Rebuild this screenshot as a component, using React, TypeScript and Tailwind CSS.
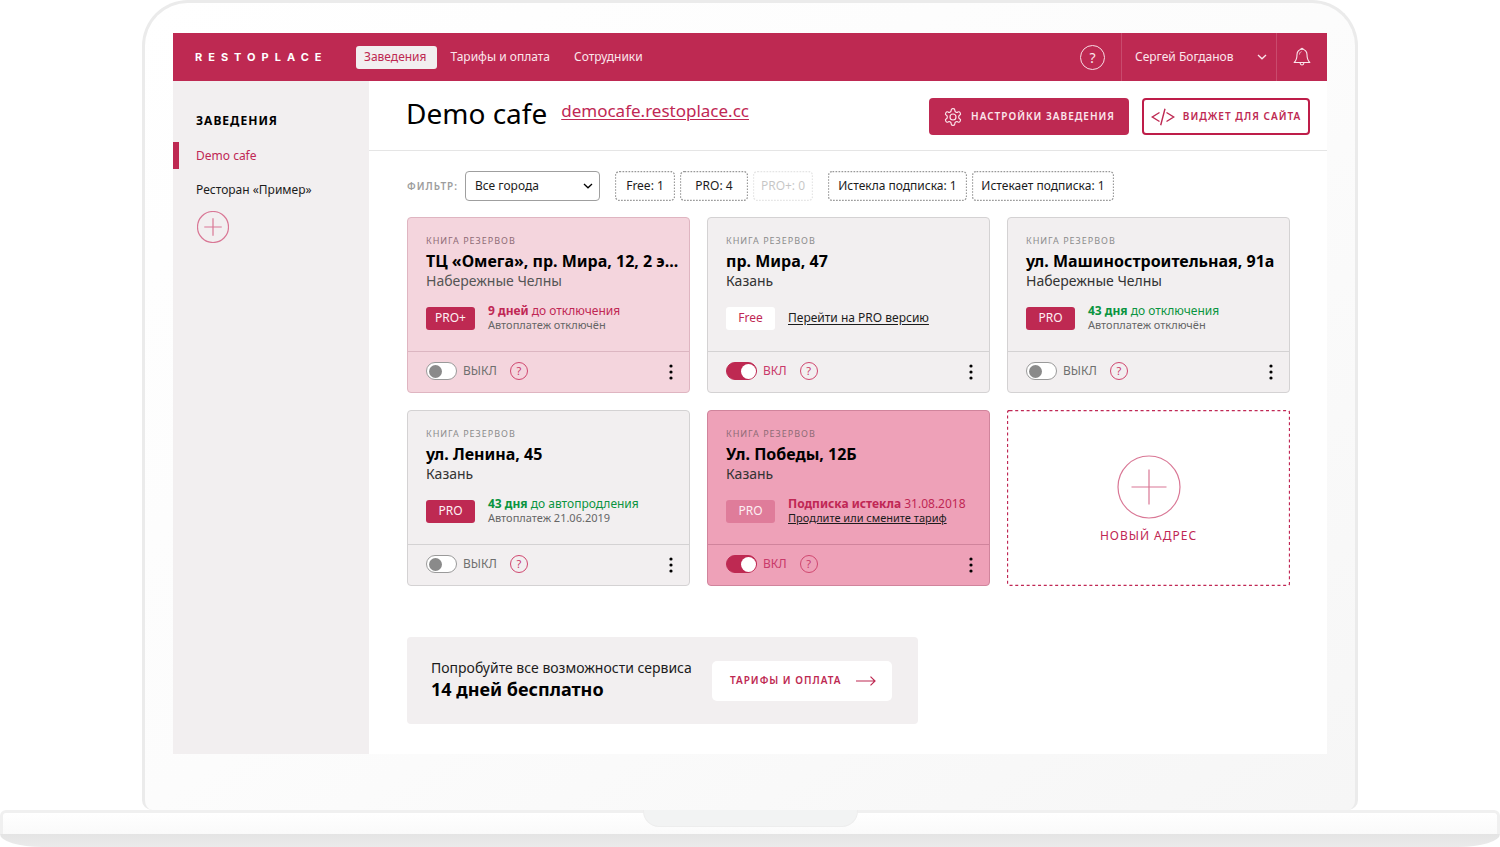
import { clsx } from "clsx";

type Plan = "PRO+" | "PRO" | "Free";

type Venue = {
  id: string;
  title: string;
  city: string;
  plan: Plan;
  tone: "gray" | "rose" | "expired";
  enabled: boolean;
  status?: { strong: string; rest: string; color: string };
  note?: string;
  link?: string;
};

const venues: Venue[] = [
  {
    id: "omega",
    title: "ТЦ «Омега», пр. Мира, 12, 2 э...",
    city: "Набережные Челны",
    plan: "PRO+",
    tone: "rose",
    enabled: false,
    status: { strong: "9 дней", rest: "до отключения", color: "text-[#c02754]" },
    note: "Автоплатеж отключён",
  },
  {
    id: "mira",
    title: "пр. Мира, 47",
    city: "Казань",
    plan: "Free",
    tone: "gray",
    enabled: true,
    link: "Перейти на PRO версию",
  },
  {
    id: "mash",
    title: "ул. Машиностроительная, 91а",
    city: "Набережные Челны",
    plan: "PRO",
    tone: "gray",
    enabled: false,
    status: { strong: "43 дня", rest: "до отключения", color: "text-[#0a9440]" },
    note: "Автоплатеж отключён",
  },
  {
    id: "lenina",
    title: "ул. Ленина, 45",
    city: "Казань",
    plan: "PRO",
    tone: "gray",
    enabled: false,
    status: { strong: "43 дня", rest: "до автопродления", color: "text-[#0a9440]" },
    note: "Автоплатеж 21.06.2019",
  },
  {
    id: "pobedy",
    title: "Ул. Победы, 12Б",
    city: "Казань",
    plan: "PRO",
    tone: "expired",
    enabled: true,
    status: { strong: "Подписка истекла", rest: "31.08.2018", color: "text-[#c02754]" },
    link: "Продлите или смените тариф",
  },
];

const tones = {
  gray: { card: "bg-[#f2eff0] border-[#d4d2d3]", line: "border-[#d4d2d3]" },
  rose: { card: "bg-[#f4d5dd] border-[#dfb5c1]", line: "border-[#dcb6c1]" },
  expired: { card: "bg-[#eea1b8] border-[#d0849c]", line: "border-[#d0849c]" },
};

function ChevronDown({ className }: { className?: string }) {
  return (
    <svg viewBox="0 0 10 6" className={clsx("h-[6px] w-[10px]", className)} fill="none" stroke="currentColor" strokeWidth="1.3">
      <path d="M1 1l4 3.8L9 1" />
    </svg>
  );
}

function PlusCircle({ className }: { className?: string }) {
  return (
    <svg viewBox="0 0 64 64" className={className} fill="none" stroke="#d97795">
      <circle cx="32" cy="32" r="31" vectorEffect="non-scaling-stroke" strokeWidth="1.2" />
      <path d="M32 14.500v35M14.500 32h35" vectorEffect="non-scaling-stroke" strokeWidth="1.2" />
    </svg>
  );
}

function GearIcon() {
  return (
    <svg viewBox="0 0 24 24" className="size-5" fill="none" stroke="currentColor" strokeWidth="1.4" strokeLinejoin="round">
      <circle cx="12" cy="12" r="3.600" />
      <path d="M12.220 2h-.44a2 2 0 0 0-2 2v.18a2 2 0 0 1-1 1.730l-.43.25a2 2 0 0 1-2 0l-.15-.08a2 2 0 0 0-2.730.73l-.22.38a2 2 0 0 0 .73 2.730l.15.1a2 2 0 0 1 1 1.720v.51a2 2 0 0 1-1 1.740l-.15.09a2 2 0 0 0-.73 2.730l.22.38a2 2 0 0 0 2.730.73l.15-.08a2 2 0 0 1 2 0l.43.25a2 2 0 0 1 1 1.730V20a2 2 0 0 0 2 2h.44a2 2 0 0 0 2-2v-.18a2 2 0 0 1 1-1.730l.43-.25a2 2 0 0 1 2 0l.15.08a2 2 0 0 0 2.730-.73l.22-.39a2 2 0 0 0-.73-2.730l-.15-.08a2 2 0 0 1-1-1.740v-.5a2 2 0 0 1 1-1.740l.15-.09a2 2 0 0 0 .73-2.730l-.22-.38a2 2 0 0 0-2.730-.73l-.15.08a2 2 0 0 1-2 0l-.43-.25a2 2 0 0 1-1-1.730V4a2 2 0 0 0-2-2z" />
    </svg>
  );
}

function CodeIcon() {
  return (
    <svg viewBox="0 0 24 18" className="h-[18px] w-6" fill="none" stroke="currentColor" strokeWidth="1.4">
      <path d="M8.500 4.500L1.300 9l7.200 4.500M15.500 4.500L22.700 9l-7.200 4.500M14 .7L9.700 17.300" />
    </svg>
  );
}

function BellIcon() {
  return (
    <svg viewBox="0 0 18 20" className="h-5 w-[18px]" fill="none" stroke="currentColor" strokeWidth="1.1" strokeLinejoin="round">
      <path d="M9 2.300c-3 0-5 2.200-5 5.200 0 4.500-1 6.300-2.800 8h15.600C15 13.800 14 12 14 7.500c0-3-2-5.200-5-5.200z" />
      <path d="M7.800 2.400a1.200 1.200 0 0 1 2.400 0M7 15.800c.2 1.500 1 2.200 2 2.200s1.800-.7 2-2.200" />
      <path d="M6.500 7.500c0-1.500.7-2.500 2-2.900" strokeWidth=".8" />
    </svg>
  );
}

function ArrowRight() {
  return (
    <svg viewBox="0 0 20 10" className="h-[10px] w-5" fill="none" stroke="currentColor" strokeWidth="1.2">
      <path d="M0 5h19M14.500.6L19 5l-4.500 4.400" />
    </svg>
  );
}

// CSS dashes are too coarse at this size, so the frame is stroked by hand
function DashedFrame({ stroke, dash, radius }: { stroke: string; dash: string; radius: number }) {
  return (
    <svg className="pointer-events-none absolute inset-0 size-full" fill="none" stroke={stroke}>
      <rect x="0.500" y="0.500" rx={radius} className="h-[calc(100%-1px)] w-[calc(100%-1px)]" strokeWidth="1.3" strokeDasharray={dash} />
    </svg>
  );
}

function Header() {
  return (
    <header className="flex h-12 items-center bg-[#be2952] text-[12px] text-[#fbe6ec]">
      <a href="#" className="ml-[22px] w-[161px] font-['Inter'] text-[11px] font-bold tracking-[6px] text-white">
        RESTOPLACE
      </a>
      <nav className="flex items-center">
        <a href="#venues" className="mr-[14px] flex h-[23px] items-center rounded-[3px] bg-[#f2eff0] pr-[10px] pl-2 text-[#be2952]">
          Заведения
        </a>
        <a href="#plans" className="mr-6">Тарифы и оплата</a>
        <a href="#staff">Сотрудники</a>
      </nav>
      <button
        type="button"
        aria-label="Помощь"
        className="mr-4 ml-auto flex size-[25px] items-center justify-center rounded-full border border-[#f8dce4] text-[14px]"
      >
        ?
      </button>
      <button type="button" className="flex h-full w-[156px] items-center justify-between border-x border-[#c94a6d] pr-[9px] pl-[13px]">
        Сергей Богданов
        <ChevronDown />
      </button>
      <button type="button" aria-label="Уведомления" className="flex h-full w-[50px] items-center justify-center">
        <BellIcon />
      </button>
    </header>
  );
}

function Sidebar() {
  return (
    <aside className="w-[196px] shrink-0 bg-[#f2eff0] pt-[31px] text-[12px]">
      <h2 className="pl-[23px] text-[12px] leading-[18px] font-bold tracking-[1px] text-black">ЗАВЕДЕНИЯ</h2>
      <ul className="mt-3 space-y-[7px]">
        <li>
          <a href="#demo" className="flex h-[27px] items-center border-l-[6px] border-[#be2952] pl-[17px] text-[#c02754]">
            Demo cafe
          </a>
        </li>
        <li>
          <a href="#example" className="flex h-[27px] items-center pl-[23px] text-[#1c1c1c]">
            Ресторан «Пример»
          </a>
        </li>
      </ul>
      <button type="button" aria-label="Добавить заведение" className="mt-2 ml-6 block">
        <PlusCircle className="size-8" />
      </button>
    </aside>
  );
}

function PageTitle() {
  return (
    <div className="flex h-[70px] items-center border-b border-[#e5e5e5] pt-[2px] pr-[17px] pl-[37px]">
      <div className="mb-2 flex items-start gap-[14px]">
        <h1 className="text-[28px] leading-8 text-black">Demo cafe</h1>
        <a href="#site" className="text-[17px] leading-7 text-[#c02754] underline decoration-1 underline-offset-2">
          democafe.restoplace.cc
        </a>
      </div>
      <button
        type="button"
        className="ml-auto flex h-[37px] w-[200px] items-center justify-center gap-2 rounded-[4px] bg-[#be2952] text-[10px] font-semibold tracking-[1px] whitespace-nowrap text-[#fbe6ec]"
      >
        <GearIcon />
        НАСТРОЙКИ ЗАВЕДЕНИЯ
      </button>
      <button
        type="button"
        className="ml-[13px] flex h-[37px] w-[168px] items-center justify-center gap-2 rounded-[4px] border-2 border-[#be1d49] text-[10px] font-semibold tracking-[1px] whitespace-nowrap text-[#be2952]"
      >
        <CodeIcon />
        ВИДЖЕТ ДЛЯ САЙТА
      </button>
    </div>
  );
}

function Chip({ label, className, disabled }: { label: string; className: string; disabled?: boolean }) {
  return (
    <button
      type="button"
      disabled={disabled}
      className={clsx("relative h-[30px] text-[12px] whitespace-nowrap text-[#1c1c1c]", disabled && "opacity-25", className)}
    >
      <DashedFrame stroke="#999" dash="1.700 1.300" radius={4} />
      {label}
    </button>
  );
}

function Filters() {
  return (
    <div className="flex items-center">
      <label htmlFor="city" className="w-[58px] text-[10px] font-semibold tracking-[1px] text-[#9d9d9d]">
        ФИЛЬТР:
      </label>
      <div className="relative mr-[15px] flex items-center">
        <select
          id="city"
          className="h-[30px] w-[135px] appearance-none rounded-[4px] border border-[#9f9f9f] bg-white pl-[9px] text-[12px] text-[#1c1c1c]"
        >
          <option>Все города</option>
          <option>Казань</option>
          <option>Набережные Челны</option>
        </select>
        <ChevronDown className="pointer-events-none absolute right-[7px]" />
      </div>
      <div className="mr-[15px] flex gap-[5px]">
        <Chip label="Free: 1" className="w-[60px]" />
        <Chip label="PRO: 4" className="w-[68px]" />
        <Chip label="PRO+: 0" className="w-[60px]" disabled />
      </div>
      <div className="flex gap-[5px]">
        <Chip label="Истекла подписка: 1" className="w-[139px]" />
        <Chip label="Истекает подписка: 1" className="w-[142px]" />
      </div>
    </div>
  );
}

function PlanBadge({ venue }: { venue: Venue }) {
  return (
    <span
      className={clsx(
        "flex h-[23px] w-[49px] shrink-0 items-center justify-center rounded-[3px] text-[12px]",
        venue.plan === "Free" && "bg-white text-[#c02754]",
        venue.plan !== "Free" && venue.tone !== "expired" && "bg-[#be2952] text-[#fdeff3]",
        venue.tone === "expired" && "bg-[#df7c9a] text-[#fdeff3]",
      )}
    >
      {venue.plan}
    </span>
  );
}

function VenueCard({ venue }: { venue: Venue }) {
  const tone = tones[venue.tone];
  return (
    <article className={clsx("rounded-[4px] border", tone.card)}>
      <div className="px-[18px] pt-4 pb-[19px]">
        <p className={clsx("text-[9px] leading-[14px] tracking-[1px]", venue.tone === "gray" ? "text-[#8c8c8c]" : "text-[#8f6b76]")}>
          КНИГА РЕЗЕРВОВ
        </p>
        <h3 className="mt-[2px] text-[16px] leading-[22px] font-bold whitespace-nowrap text-black">{venue.title}</h3>
        <p className={clsx("text-[14px] leading-[18px]", venue.tone === "rose" ? "text-[#555]" : "text-[#333]")}>{venue.city}</p>
        <div className="mt-[14px] flex h-7 items-center gap-[13px]">
          <PlanBadge venue={venue} />
          {venue.status ? (
            <div className="whitespace-nowrap">
              <p className={clsx("text-[12px] leading-[14px]", venue.status.color)}>
                <b>{venue.status.strong}</b> {venue.status.rest}
              </p>
              {venue.note && <p className="text-[11px] leading-[14px] text-[#666]">{venue.note}</p>}
              {venue.link && (
                <a href="#renew" className="block text-[11px] leading-[14px] text-[#1c1c1c] underline">
                  {venue.link}
                </a>
              )}
            </div>
          ) : (
            <a href="#upgrade" className="text-[12px] whitespace-nowrap text-[#1c1c1c] underline underline-offset-2">
              {venue.link}
            </a>
          )}
        </div>
      </div>
      <div className={clsx("flex h-[41px] items-center border-t pr-4 pb-[2px] pl-[18px]", tone.line)}>
        <input
          id={venue.id}
          type="checkbox"
          role="switch"
          defaultChecked={venue.enabled}
          className="flex h-[18px] w-[31px] appearance-none items-center rounded-full border border-[#9a9a9a] bg-white px-[2px] before:size-[13px] before:rounded-full before:bg-[#8a8a8a] checked:justify-end checked:border-[#be2952] checked:bg-[#be2952] checked:px-0 checked:before:size-[15px] checked:before:bg-white"
        />
        <label htmlFor={venue.id} className={clsx("ml-[6px] text-[12px]", venue.enabled ? "text-[#c9396a]" : "text-[#6f6f6f]")}>
          {venue.enabled ? "ВКЛ" : "ВЫКЛ"}
        </label>
        <button
          type="button"
          aria-label="Справка"
          className="ml-[13px] flex size-[18px] items-center justify-center rounded-full border border-[#d0476f] text-[11px] text-[#c9396a]"
        >
          ?
        </button>
        <button type="button" aria-label="Меню" className="ml-auto">
          <svg viewBox="0 0 4 16" className="mt-[2px] h-4 w-1" fill="#000">
            <circle cx="2" cy="2" r="1.600" />
            <circle cx="2" cy="8" r="1.600" />
            <circle cx="2" cy="14" r="1.600" />
          </svg>
        </button>
      </div>
    </article>
  );
}

function NewAddress() {
  return (
    <button type="button" className="relative flex flex-col items-center justify-center pt-1 text-[12px] tracking-[1px] text-[#c02754]">
      <DashedFrame stroke="#c02754" dash="3 2.700" radius={2} />
      <PlusCircle className="size-16" />
      <span className="mt-2 leading-[18px]">НОВЫЙ АДРЕС</span>
    </button>
  );
}

function Promo() {
  return (
    <section className="mt-[51px] flex h-[87px] w-fit items-center rounded-[4px] bg-[#f2eff0] pr-[26px] pl-6">
      <div className="mb-1 w-[281px] whitespace-nowrap">
        <p className="text-[14px] leading-5 text-[#1c1c1c]">Попробуйте все возможности сервиса</p>
        <p className="text-[18px] leading-[22px] font-bold text-black">14 дней бесплатно</p>
      </div>
      <a
        href="#plans"
        className="flex h-10 w-[180px] items-center justify-between rounded-[5px] bg-white pr-4 pl-[18px] text-[10px] font-semibold tracking-[1px] whitespace-nowrap text-[#be2952]"
      >
        ТАРИФЫ И ОПЛАТА
        <ArrowRight />
      </a>
    </section>
  );
}

export default function App() {
  return (
    <div className="bg-white font-['Noto_Sans','Open_Sans',sans-serif]">
      <div className="mx-[142px] rounded-t-[46px] rounded-b-[10px] border-x-[3px] border-t-[3px] border-[#ebebeb] bg-gradient-to-br from-white via-[#fcfcfc] to-[#f6f6f6] px-7 pt-[30px] pb-[56px]">
        <div className="bg-white">
          <Header />
          <div className="flex">
            <Sidebar />
            <main className="min-w-0 flex-1">
              <PageTitle />
              <div className="pt-5 pr-[37px] pb-[30px] pl-[38px]">
                <Filters />
                <div className="mt-4 grid grid-cols-3 gap-[17px]">
                  {venues.map((venue) => (
                    <VenueCard key={venue.id} venue={venue} />
                  ))}
                  <NewAddress />
                </div>
                <Promo />
              </div>
            </main>
          </div>
        </div>
      </div>
      <div>
        <div className="h-6 rounded-t-[6px] border-x-[3px] border-t-[3px] border-[#f0f0f0] bg-gradient-to-b from-white to-[#fafafa]">
          <div className="mx-auto -mt-[3px] h-[17px] w-[215px] rounded-b-[16px] border border-t-0 border-[#ededed] bg-[#f2f3f3]" />
        </div>
        <div className="h-[13px] rounded-bl-[42px_13px] rounded-br-[42px_13px] bg-gradient-to-b from-[#e4e4e4] to-[#ebebeb]" />
      </div>
    </div>
  );
}
